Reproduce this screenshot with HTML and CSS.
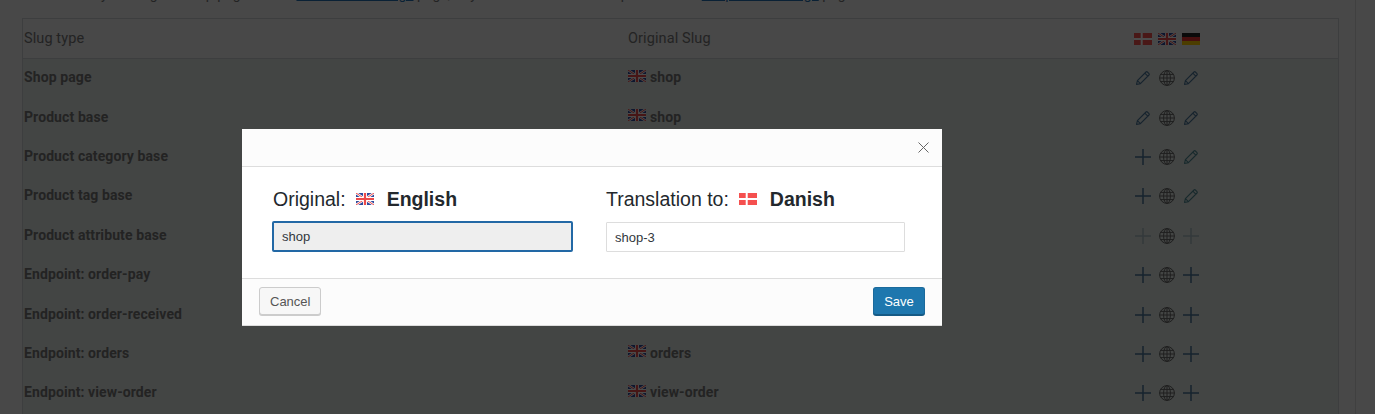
FILE: index.html
```html
<!DOCTYPE html>
<html lang="en">
  <head>
    <meta charset="UTF-8" />
    <meta name="viewport" content="width=device-width, initial-scale=1.0" />
    <title>Slug translation</title>
    <link rel="stylesheet" href="styles.css">
  </head>
  <body>
    <svg class="defs" width="0" height="0">
      <symbol id="flag-en" viewBox="0 0 18 12">
        <rect width="18" height="12" fill="#2f4a9c" />
        <path d="M0 0L18 12M18 0L0 12" stroke="#fff" stroke-width="2.4" />
        <path d="M0 0L18 12M18 0L0 12" stroke="#ec4a4a" stroke-width="1" />
        <path d="M9 0V12M0 6H18" stroke="#fff" stroke-width="4" />
        <path d="M9 0V12M0 6H18" stroke="#ec4a4a" stroke-width="2.2" />
      </symbol>
      <symbol id="flag-da" viewBox="0 0 18 12">
        <rect width="18" height="12" fill="#f5504f" />
        <path d="M7.7 0V12M0 6H18" stroke="#fff" stroke-width="2" />
      </symbol>
      <symbol id="flag-de" viewBox="0 0 18 12">
        <rect width="18" height="4" fill="#222" />
        <rect y="4" width="18" height="4" fill="#e33" />
        <rect y="8" width="18" height="4" fill="#fc0" />
      </symbol>
      <symbol id="i-edit" viewBox="0 0 16 16">
        <path d="M1.5 14.5l.9-3.9 8.6-8.6a1 1 0 0 1 1.4 0l1.6 1.6a1 1 0 0 1 0 1.4l-8.6 8.6zM2.4 10.6l3 3M9.8 3.2l3 3" fill="none" stroke="currentColor" stroke-width="1.1" stroke-linejoin="round" />
      </symbol>
      <symbol id="i-add" viewBox="0 0 16 16">
        <path d="M8 0V16M0 8H16" fill="none" stroke="currentColor" stroke-width="1.5" />
      </symbol>
      <symbol id="i-globe" viewBox="0 0 16 16">
        <g fill="none" stroke="currentColor" stroke-width="1">
          <circle cx="8" cy="8" r="7.4" />
          <ellipse cx="8" cy="8" rx="3.4" ry="7.4" />
          <path d="M8 .6V15.4M.6 8H15.4M1.7 4.4H14.3M1.7 11.6H14.3" />
        </g>
      </symbol>
    </svg>

    <div class="page">
      <main class="content">
        <p class="note">
          You can set your slugs in shop pages in the <a href="#">Permalink Settings</a> page, or you can also set the endpoints at the <a href="#">Endpoints Settings</a> page
        </p>

        <div class="slugs">
          <div class="row head">
            <div>Slug type</div>
            <div>Original Slug</div>
            <div class="cell-icons">
              <svg class="flag"><use href="#flag-da" /></svg>
              <svg class="flag"><use href="#flag-en" /></svg>
              <svg class="flag"><use href="#flag-de" /></svg>
            </div>
          </div>

          <div class="row">
            <div>Shop page</div>
            <div class="orig"><svg class="flag"><use href="#flag-en" /></svg>shop</div>
            <div class="cell-icons">
              <svg class="icon blue"><use href="#i-edit" /></svg>
              <svg class="icon"><use href="#i-globe" /></svg>
              <svg class="icon blue"><use href="#i-edit" /></svg>
            </div>
          </div>
          <div class="row">
            <div>Product base</div>
            <div class="orig"><svg class="flag"><use href="#flag-en" /></svg>shop</div>
            <div class="cell-icons">
              <svg class="icon blue"><use href="#i-edit" /></svg>
              <svg class="icon"><use href="#i-globe" /></svg>
              <svg class="icon blue"><use href="#i-edit" /></svg>
            </div>
          </div>
          <div class="row">
            <div>Product category base</div>
            <div class="orig"></div>
            <div class="cell-icons">
              <svg class="icon blue"><use href="#i-add" /></svg>
              <svg class="icon"><use href="#i-globe" /></svg>
              <svg class="icon teal"><use href="#i-edit" /></svg>
            </div>
          </div>
          <div class="row">
            <div>Product tag base</div>
            <div class="orig"></div>
            <div class="cell-icons">
              <svg class="icon blue"><use href="#i-add" /></svg>
              <svg class="icon"><use href="#i-globe" /></svg>
              <svg class="icon teal"><use href="#i-edit" /></svg>
            </div>
          </div>
          <div class="row">
            <div>Product attribute base</div>
            <div class="orig"></div>
            <div class="cell-icons">
              <svg class="icon dim"><use href="#i-add" /></svg>
              <svg class="icon"><use href="#i-globe" /></svg>
              <svg class="icon dim"><use href="#i-add" /></svg>
            </div>
          </div>
          <div class="row">
            <div>Endpoint: order-pay</div>
            <div class="orig"></div>
            <div class="cell-icons">
              <svg class="icon blue"><use href="#i-add" /></svg>
              <svg class="icon"><use href="#i-globe" /></svg>
              <svg class="icon blue"><use href="#i-add" /></svg>
            </div>
          </div>
          <div class="row">
            <div>Endpoint: order-received</div>
            <div class="orig"></div>
            <div class="cell-icons">
              <svg class="icon blue"><use href="#i-add" /></svg>
              <svg class="icon"><use href="#i-globe" /></svg>
              <svg class="icon blue"><use href="#i-add" /></svg>
            </div>
          </div>
          <div class="row">
            <div>Endpoint: orders</div>
            <div class="orig"><svg class="flag"><use href="#flag-en" /></svg>orders</div>
            <div class="cell-icons">
              <svg class="icon blue"><use href="#i-add" /></svg>
              <svg class="icon"><use href="#i-globe" /></svg>
              <svg class="icon blue"><use href="#i-add" /></svg>
            </div>
          </div>
          <div class="row">
            <div>Endpoint: view-order</div>
            <div class="orig"><svg class="flag"><use href="#flag-en" /></svg>view-order</div>
            <div class="cell-icons">
              <svg class="icon blue"><use href="#i-add" /></svg>
              <svg class="icon"><use href="#i-globe" /></svg>
              <svg class="icon blue"><use href="#i-add" /></svg>
            </div>
          </div>
        </div>
      </main>
      <aside class="scrollbar"></aside>
    </div>

    <div class="overlay"></div>

    <div class="dialog">
      <div class="dialog-head">
        <svg class="close" viewBox="0 0 11 11"><path d="M.5 .5L10.5 10.5M10.5 .5L.5 10.5" fill="none" stroke="#666" stroke-width="1" /></svg>
      </div>
      <div class="dialog-body">
        <div class="field">
          <div class="field-title field-title-orig">
            Original:
            <svg class="flag"><use href="#flag-en" /></svg>
            <strong>English</strong>
          </div>
          <input class="input input-orig" type="text" value="shop" readonly />
        </div>
        <div class="field field-to">
          <div class="field-title">
            Translation to:
            <svg class="flag"><use href="#flag-da" /></svg>
            <strong>Danish</strong>
          </div>
          <input class="input" type="text" value="shop-3" />
        </div>
      </div>
      <div class="dialog-foot">
        <button class="btn">Cancel</button>
        <button class="btn btn-primary">Save</button>
      </div>
    </div>
  </body>
</html>
```

FILE: styles.css
```css
html,
body {
  height: 100%;
}
body {
  margin: 0;
  overflow: hidden;
  background: #f0f0f1;
  color: #777;
  font-family: "Roboto", "Liberation Sans", sans-serif;
  font-size: 14px;
}
.defs {
  display: block;
  height: 0;
}
.page {
  display: flex;
  height: 414px;
}
.content {
  flex: 1;
  padding: 0 16px 0 22px;
  overflow: hidden;
}
.scrollbar {
  width: 19px;
  border-left: 1px solid #d8d8d8;
}
/* only the foot of this line is still in view */
.note {
  height: 33px;
  margin: -15px 0 0;
  padding-left: 3px;
  overflow: hidden;
  line-height: 18px;
  white-space: nowrap;
}
.note a {
  color: #2271b1;
}
.slugs {
  border: 1px solid #ccd0d4;
  background: #fff;
}
.row {
  display: grid;
  grid-template-columns: 604px 506px 1fr;
  align-items: center;
  box-sizing: border-box;
  height: 39.4px;
  padding: 0 0 3px 1px;
  background: #e0e6e3;
  font-weight: 700;
  letter-spacing: 0.1px;
}
.head {
  height: 40px;
  padding-bottom: 0;
  background: #f0f0f1;
  border-bottom: 1px solid #ccd0d4;
  font-size: 14.5px;
  font-weight: 400;
}
.orig {
  display: flex;
  align-items: center;
  gap: 4px;
}
.orig .flag {
  margin-top: -3px;
}
.cell-icons {
  display: flex;
  align-items: center;
  gap: 6px;
}
.flag {
  width: 18px;
  height: 12px;
  flex: none;
}
.icon {
  width: 18px;
  height: 16px;
  margin-top: 2px;
  color: #666;
}
.blue {
  color: #4a7598;
}
.teal {
  color: #4f8a94;
}
.dim {
  color: #4a7598;
  opacity: 0.35;
}
.overlay {
  position: fixed;
  inset: 0;
  background: rgba(0, 0, 0, 0.7);
}
.dialog {
  position: absolute;
  left: 242px;
  top: 129px;
  width: 700px;
  height: 197px;
  display: flex;
  flex-direction: column;
  background: #fff;
  color: #23282d;
  font-family: "Liberation Sans", Arial, sans-serif;
}
.dialog-head {
  display: flex;
  justify-content: flex-end;
  align-items: center;
  height: 37px;
  padding-right: 13px;
  background: #fcfcfc;
  border-bottom: 1px solid #ddd;
}
.close {
  width: 11px;
  height: 11px;
}
.dialog-body {
  flex: 1;
  display: flex;
  gap: 33px;
  padding: 19px 37px 0 30px;
}
.field {
  width: 301px;
}
.field-to {
  width: 299px;
}
.field-title {
  display: flex;
  align-items: center;
  height: 26px;
  margin-bottom: 9px;
  font-size: 19.5px;
}
.field-to .field-title {
  margin-bottom: 10px;
}
.field-title-orig {
  padding-left: 1px;
}
.field-title .flag {
  margin: 0 13px 0 10px;
}
.field-title strong {
  font-weight: 700;
}
.input {
  display: block;
  box-sizing: border-box;
  width: 100%;
  height: 30px;
  margin: 0;
  padding: 0 8px;
  border: 1px solid #ddd;
  border-radius: 1px;
  background: #fff;
  color: #32373c;
  font-family: inherit;
  font-size: 13px;
  outline: 0;
}
.input-orig {
  height: 31px;
  border: 2px solid #2268a5;
  border-radius: 2px;
  background: #eee;
}
.dialog-foot {
  display: flex;
  justify-content: space-between;
  align-items: flex-start;
  height: 48px;
  padding: 8px 17px 0;
  box-sizing: border-box;
  background: #fcfcfc;
  border-top: 1px solid #ddd;
  border-bottom: 1px solid #ddd;
}
.btn {
  height: 28px;
  padding: 0 10px;
  border: 1px solid #ccc;
  border-radius: 3px;
  background: #f7f7f7;
  box-shadow: 0 1px 0 #ccc;
  color: #555;
  font-family: inherit;
  font-size: 13px;
}
.btn-primary {
  width: 52px;
  padding: 0;
  border-color: #1b6a9c #1b6a9c #155a85;
  background: #1e77ae;
  box-shadow: 0 1px 0 #155a85;
  color: #fff;
}
```
